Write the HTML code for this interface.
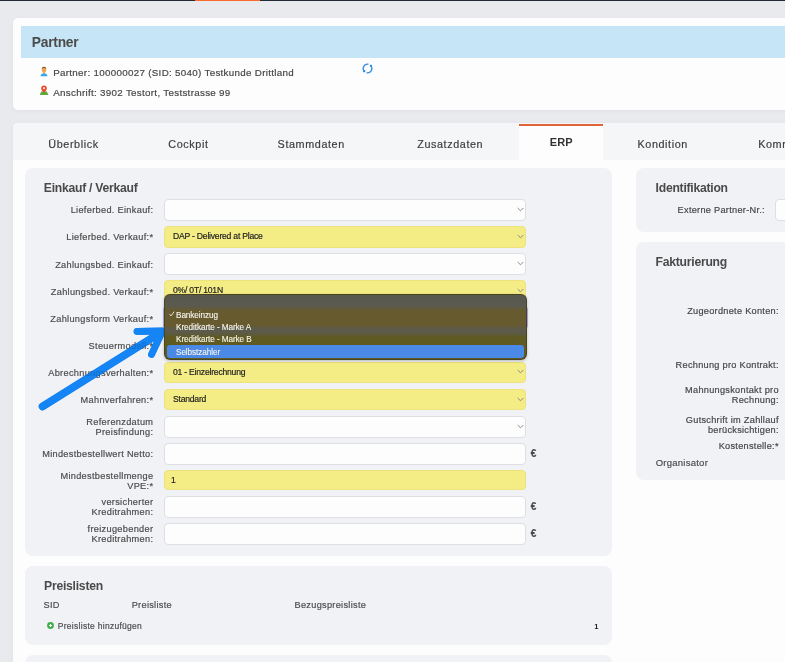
<!DOCTYPE html>
<html><head><meta charset="utf-8">
<style>
*{box-sizing:border-box;margin:0;padding:0}
html,body{width:785px;height:662px;overflow:hidden}
body{background:#e9eaee;font-family:"Liberation Sans",sans-serif;color:#4a4a4a;position:relative}
.abs{position:absolute}
.t{position:absolute;white-space:nowrap;line-height:12px;-webkit-text-stroke:0.18px currentColor}
.topbar{left:0;top:0;width:785px;height:1px;background:#232a35}
.topbar .or{position:absolute;left:195px;width:65px;top:0;height:1px;background:#fa6a2a}
.card1{left:13px;top:18px;width:800px;height:92px;background:#fdfdfd;border-radius:5px;box-shadow:0 1px 5px rgba(0,0,0,.04)}
.card1 .hdr{position:absolute;left:8px;top:8px;right:0;height:31.5px;background:#c6e5f6}
.pline{position:absolute;font-size:10.5px;color:#484848;white-space:nowrap;line-height:12px}
.card2{left:13px;top:123px;width:800px;height:600px;background:#fdfdfd;border-radius:5px;box-shadow:0 1px 5px rgba(0,0,0,.04)}
.tabbar{position:absolute;left:0;top:0;right:0;height:37px;background:#f5f6f8;border-radius:5px 5px 0 0}
.tab{position:absolute;font-size:12px;color:#444;white-space:nowrap;line-height:14px}
.erp{position:absolute;left:506.3px;top:1px;width:83.7px;height:36px;background:#fdfdfd;border-top:2px solid #e0643a}
.panel{position:absolute;background:#f1f2f6;border-radius:8px}
.ph{position:absolute;font-size:11.7px;font-weight:700;color:#454545;white-space:nowrap;line-height:14px}
.lbl{position:absolute;right:632px;font-size:9.7px;color:#505050;text-align:right;white-space:nowrap;line-height:10.5px}
.rl{position:absolute;right:6.5px;font-size:9.7px;color:#505050;text-align:right;white-space:nowrap;line-height:10.5px}
.inp{position:absolute;left:164px;width:362px;height:21px;background:#fdfdfd;border:1px solid #dedfe3;border-radius:4px}
.inp.y{background:#f4ec84;border-color:#eee27c}
.inp .v{position:absolute;left:7px;top:5px;font-size:8.5px;letter-spacing:-0.15px;color:#333;white-space:nowrap;line-height:10px}
.chev{position:absolute;right:3px;top:50%;margin-top:-2px;width:7px;height:4.5px}
.eur{position:absolute;left:531px;font-size:9.5px;color:#555;line-height:12px}
.dd{position:absolute;left:164px;top:293.5px;width:362.5px;height:66px;border-radius:6px;border:1px solid rgba(70,66,30,.9);
 background:linear-gradient(to bottom,#58584f 0px,#5a5a50 11px,#665a31 15px,#675a2e 30px,#5d5a4c 34px,#5c5a48 38px,#5f5a22 42px,#5f5a20 66px);
 box-shadow:0 1px 3px rgba(0,0,0,.25)}
.dd .it{position:absolute;left:11px;font-size:8.2px;color:#f6f4ec;white-space:nowrap;line-height:10px;-webkit-text-stroke:0.12px currentColor;letter-spacing:-0.08px}
.dd .hl{position:absolute;left:2px;top:50.5px;width:357px;height:12.5px;background:#4a89e6;border-radius:3px}
</style></head><body>
<div class="abs topbar"><div class="or"></div></div>
<div class="abs card1"><div class="hdr"></div></div>
<div class="t" style="left:31.8px;top:35px;font-size:13.8px;line-height:16px;color:#4b4b4b;letter-spacing:-0.25px;font-weight:700;-webkit-text-stroke:0">Partner</div>
<svg class="abs" style="left:39px;top:65.5px" width="10" height="11" viewBox="0 0 10 11">
<path d="M1.5 10.2 C1.7 8.2 3 7.2 5 7.2 C7 7.2 8.3 8.2 8.5 10.2z" fill="#3aa6ea"/>
<path d="M4.2 6.2 H5.8 V7.8 H4.2z" fill="#e89040"/>
<ellipse cx="5" cy="3.8" rx="2.2" ry="2.8" fill="#f0a550"/>
<path d="M2.8 3.4 C2.7 1.6 3.6 0.8 5 0.8 C6.4 0.8 7.3 1.6 7.2 3.4 C6.8 2.4 6 2.1 5 2.1 C4 2.1 3.2 2.4 2.8 3.4z" fill="#7a4a20"/>
</svg>
<div class="t" style="left:53.2px;top:67px;font-size:9.8px;line-height:12px;color:#464646;letter-spacing:0.3px">Partner: 100000027 (SID: 5040) Testkunde Drittland</div>
<svg class="abs" style="left:39px;top:85px" width="10" height="10" viewBox="0 0 10 10">
<path d="M0.8 9.9 L2.2 6.5 H7.8 L9.5 9.9z" fill="#5eaa3c"/>
<path d="M5 0.4 C6.6 0.4 7.9 1.6 7.9 3.2 C7.9 5 5.8 6.6 5 8 C4.2 6.6 2.1 5 2.1 3.2 C2.1 1.6 3.4 0.4 5 0.4z" fill="#f04426"/>
<circle cx="5" cy="3.2" r="1.1" fill="#fbe9e0"/>
</svg>
<div class="t" style="left:53.2px;top:87px;font-size:9.8px;line-height:12px;color:#464646;letter-spacing:0.3px">Anschrift: 3902 Testort, Teststrasse 99</div>
<svg class="abs" style="left:361.6px;top:63.2px" width="11" height="11" viewBox="0 0 11 11">
<path d="M6.39 1.29 A4.3 4.3 0 0 0 2.21 8.26" stroke="#3a8fe2" stroke-width="1.4" fill="none"/>
<path d="M4.61 9.71 A4.3 4.3 0 0 0 8.89 2.85" stroke="#3a8fe2" stroke-width="1.4" fill="none"/>
<circle cx="2.21" cy="8.26" r="1.15" fill="#2a86e0"/>
<circle cx="8.89" cy="2.85" r="1.15" fill="#2a86e0"/>
</svg>
<div class="abs card2"><div class="tabbar"></div><div class="erp"></div></div>
<div class="t" style="left:48.3px;top:137px;font-size:10.8px;line-height:14px;color:#3c3c3c;letter-spacing:0.6px">Überblick</div>
<div class="t" style="left:168.3px;top:137px;font-size:10.8px;line-height:14px;color:#3c3c3c;letter-spacing:0.6px">Cockpit</div>
<div class="t" style="left:277.6px;top:137px;font-size:10.8px;line-height:14px;color:#3c3c3c;letter-spacing:0.6px">Stammdaten</div>
<div class="t" style="left:417.2px;top:137px;font-size:10.8px;line-height:14px;color:#3c3c3c;letter-spacing:0.6px">Zusatzdaten</div>
<div class="t" style="left:637.5px;top:137px;font-size:10.8px;line-height:14px;color:#3c3c3c;letter-spacing:0.6px">Kondition</div>
<div class="t" style="left:758.2px;top:137px;font-size:10.8px;line-height:14px;color:#3c3c3c;letter-spacing:0.6px">Kommunikation</div>
<div class="t" style="left:549.8px;top:135px;font-size:11px;line-height:14px;color:#333;letter-spacing:0.05px;font-weight:700;-webkit-text-stroke:0">ERP</div>
<div class="panel" style="left:24.6px;top:167.5px;width:587.4px;height:388px"></div>
<div class="t" style="left:43.8px;top:181px;font-size:12.2px;line-height:14px;color:#4a4a4a;letter-spacing:-0.26px;font-weight:700;-webkit-text-stroke:0">Einkauf / Verkauf</div>
<div class="t" style="right:631.68px;text-align:right;top:204px;font-size:9.2px;line-height:12px;color:#4c4c4c;letter-spacing:0.32px">Lieferbed. Einkauf:</div>
<div class="inp" style="top:199px;height:22px"></div>
<svg class="abs" style="left:516.5px;top:207.1px" width="7" height="5" viewBox="0 0 7 5"><path d="M0.7 1 L3.5 3.8 L6.3 1" stroke="#8a8a8a" stroke-width="1" fill="none"/></svg>
<div class="t" style="right:631.68px;text-align:right;top:231px;font-size:9.2px;line-height:12px;color:#4c4c4c;letter-spacing:0.32px">Lieferbed. Verkauf:*</div>
<div class="inp y" style="top:226px;height:21.5px"></div>
<div class="t" style="left:173px;top:230px;font-size:8.6px;line-height:12px;color:#222;letter-spacing:-0.22px">DAP - Delivered at Place</div>
<svg class="abs" style="left:516.5px;top:233.8px" width="7" height="5" viewBox="0 0 7 5"><path d="M0.7 1 L3.5 3.8 L6.3 1" stroke="#8a8a8a" stroke-width="1" fill="none"/></svg>
<div class="t" style="right:631.68px;text-align:right;top:259px;font-size:9.2px;line-height:12px;color:#4c4c4c;letter-spacing:0.32px">Zahlungsbed. Einkauf:</div>
<div class="inp" style="top:253px;height:21.5px"></div>
<svg class="abs" style="left:516.5px;top:260.9px" width="7" height="5" viewBox="0 0 7 5"><path d="M0.7 1 L3.5 3.8 L6.3 1" stroke="#8a8a8a" stroke-width="1" fill="none"/></svg>
<div class="t" style="right:631.68px;text-align:right;top:286px;font-size:9.2px;line-height:12px;color:#4c4c4c;letter-spacing:0.32px">Zahlungsbed. Verkauf:*</div>
<div class="inp y" style="top:280px;height:21.5px"></div>
<div class="t" style="left:173px;top:284px;font-size:8.6px;line-height:12px;color:#222;letter-spacing:-0.22px">0%/ 0T/ 101N</div>
<svg class="abs" style="left:516.5px;top:287.9px" width="7" height="5" viewBox="0 0 7 5"><path d="M0.7 1 L3.5 3.8 L6.3 1" stroke="#8a8a8a" stroke-width="1" fill="none"/></svg>
<div class="t" style="right:631.68px;text-align:right;top:313px;font-size:9.2px;line-height:12px;color:#4c4c4c;letter-spacing:0.32px">Zahlungsform Verkauf:*</div>
<div class="inp y" style="top:307px;height:21.5px"></div>
<svg class="abs" style="left:516.5px;top:314.9px" width="7" height="5" viewBox="0 0 7 5"><path d="M0.7 1 L3.5 3.8 L6.3 1" stroke="#8a8a8a" stroke-width="1" fill="none"/></svg>
<div class="t" style="right:631.68px;text-align:right;top:340px;font-size:9.2px;line-height:12px;color:#4c4c4c;letter-spacing:0.32px">Steuermodell:*</div>
<div class="inp y" style="top:334px;height:21.5px"></div>
<svg class="abs" style="left:516.5px;top:341.9px" width="7" height="5" viewBox="0 0 7 5"><path d="M0.7 1 L3.5 3.8 L6.3 1" stroke="#8a8a8a" stroke-width="1" fill="none"/></svg>
<div class="t" style="right:631.68px;text-align:right;top:367px;font-size:9.2px;line-height:12px;color:#4c4c4c;letter-spacing:0.32px">Abrechnungsverhalten:*</div>
<div class="inp y" style="top:361.5px;height:21.5px"></div>
<div class="t" style="left:173px;top:366px;font-size:8.6px;line-height:12px;color:#222;letter-spacing:-0.22px">01 - Einzelrechnung</div>
<svg class="abs" style="left:516.5px;top:369.4px" width="7" height="5" viewBox="0 0 7 5"><path d="M0.7 1 L3.5 3.8 L6.3 1" stroke="#8a8a8a" stroke-width="1" fill="none"/></svg>
<div class="t" style="right:631.68px;text-align:right;top:394px;font-size:9.2px;line-height:12px;color:#4c4c4c;letter-spacing:0.32px">Mahnverfahren:*</div>
<div class="inp y" style="top:389px;height:21px"></div>
<div class="t" style="left:173px;top:393px;font-size:8.6px;line-height:12px;color:#222;letter-spacing:-0.22px">Standard</div>
<svg class="abs" style="left:516.5px;top:396.6px" width="7" height="5" viewBox="0 0 7 5"><path d="M0.7 1 L3.5 3.8 L6.3 1" stroke="#8a8a8a" stroke-width="1" fill="none"/></svg>
<div class="t" style="right:631.68px;text-align:right;top:416px;font-size:9.2px;line-height:12px;color:#4c4c4c;letter-spacing:0.32px">Referenzdatum</div>
<div class="t" style="right:631.68px;text-align:right;top:426px;font-size:9.2px;line-height:12px;color:#4c4c4c;letter-spacing:0.32px">Preisfindung:</div>
<div class="inp" style="top:416px;height:21.5px"></div>
<svg class="abs" style="left:516.5px;top:423.9px" width="7" height="5" viewBox="0 0 7 5"><path d="M0.7 1 L3.5 3.8 L6.3 1" stroke="#8a8a8a" stroke-width="1" fill="none"/></svg>
<div class="t" style="right:631.68px;text-align:right;top:448px;font-size:9.2px;line-height:12px;color:#4c4c4c;letter-spacing:0.32px">Mindestbestellwert Netto:</div>
<div class="inp" style="top:443px;height:21.5px"></div>
<div class="t" style="left:530.8px;top:448px;font-size:10px;line-height:12px;color:#4a4a4a;font-weight:600">€</div>
<div class="t" style="right:631.68px;text-align:right;top:470px;font-size:9.2px;line-height:12px;color:#4c4c4c;letter-spacing:0.32px">Mindestbestellmenge</div>
<div class="t" style="right:631.68px;text-align:right;top:480px;font-size:9.2px;line-height:12px;color:#4c4c4c;letter-spacing:0.32px">VPE:*</div>
<div class="inp y" style="top:470px;height:20px"></div>
<div class="t" style="left:171px;top:474px;font-size:8.6px;line-height:12px;color:#222;letter-spacing:-0.22px">1</div>
<div class="t" style="right:631.68px;text-align:right;top:496px;font-size:9.2px;line-height:12px;color:#4c4c4c;letter-spacing:0.32px">versicherter</div>
<div class="t" style="right:631.68px;text-align:right;top:506px;font-size:9.2px;line-height:12px;color:#4c4c4c;letter-spacing:0.32px">Kreditrahmen:</div>
<div class="inp" style="top:495.5px;height:22px"></div>
<div class="t" style="left:530.8px;top:501px;font-size:10px;line-height:12px;color:#4a4a4a;font-weight:600">€</div>
<div class="t" style="right:631.68px;text-align:right;top:523px;font-size:9.2px;line-height:12px;color:#4c4c4c;letter-spacing:0.32px">freizugebender</div>
<div class="t" style="right:631.68px;text-align:right;top:533px;font-size:9.2px;line-height:12px;color:#4c4c4c;letter-spacing:0.32px">Kreditrahmen:</div>
<div class="inp" style="top:523px;height:21.5px"></div>
<div class="t" style="left:530.8px;top:528px;font-size:10px;line-height:12px;color:#4a4a4a;font-weight:600">€</div>
<svg class="abs" style="left:0;top:0;mix-blend-mode:multiply" width="785" height="662" viewBox="0 0 785 662">
<g stroke="#1689fd" stroke-linecap="round" stroke-linejoin="round" fill="none">
<path d="M42.5 406.5 L160 333" stroke-width="7.5"/>
<path d="M137 331.5 L162.5 331 L151.5 354.5" stroke-width="6.8"/>
</g></svg>
<svg class="abs" style="left:0;top:0;opacity:0.75" width="785" height="662" viewBox="0 0 785 662">
<g stroke="#1585f4" stroke-linecap="round" stroke-linejoin="round" fill="none">
<path d="M42.5 406.5 L160 333" stroke-width="7.5"/>
<path d="M137 331.5 L162.5 331 L151.5 354.5" stroke-width="6.8"/>
</g></svg>
<div class="abs" style="left:162.5px;top:307px;width:2.5px;height:21px;background:#b3acf2;border-radius:2px 0 0 2px"></div>
<div class="abs" style="left:526px;top:307px;width:2px;height:21px;background:#b3acf2;border-radius:0 2px 2px 0"></div>
<div class="dd"><div class="hl"></div><div class="it" style="top:16.1px">Bankeinzug</div><div class="it" style="top:28.1px">Kreditkarte - Marke A</div><div class="it" style="top:40.1px">Kreditkarte - Marke B</div><div class="it" style="top:53.1px">Selbstzahler</div><svg class="abs" style="left:4.3px;top:16.8px" width="6" height="6" viewBox="0 0 6 6"><path d="M0.6 3.2 L2 4.9 L5.2 0.6" stroke="#f2f0e6" stroke-width="0.9" fill="none"/></svg></div>
<div class="panel" style="left:24.6px;top:565.7px;width:587.4px;height:79.8px"></div>
<div class="t" style="left:44.1px;top:579px;font-size:12.2px;line-height:14px;color:#4a4a4a;letter-spacing:-0.26px;font-weight:700;-webkit-text-stroke:0">Preislisten</div>
<div class="t" style="left:43.6px;top:599px;font-size:9.2px;line-height:12px;color:#4d4d4d;letter-spacing:0.3px">SID</div>
<div class="t" style="left:131.7px;top:599px;font-size:9.2px;line-height:12px;color:#4d4d4d;letter-spacing:0.3px">Preisliste</div>
<div class="t" style="left:294.5px;top:599px;font-size:9.2px;line-height:12px;color:#4d4d4d;letter-spacing:0.3px">Bezugspreisliste</div>
<svg class="abs" style="left:46.6px;top:622px" width="7" height="7" viewBox="0 0 7 7"><circle cx="3.5" cy="3.5" r="3.4" fill="#3fae49"/><path d="M3.5 1.9V5.1M1.9 3.5H5.1" stroke="#fff" stroke-width="1.1"/></svg>
<div class="t" style="left:57.8px;top:620px;font-size:8.5px;line-height:12px;color:#4d4d4d;letter-spacing:0.28px">Preisliste hinzufügen</div>
<div class="t" style="left:594.2px;top:622px;font-size:7.5px;line-height:10px;color:#222;font-weight:700;-webkit-text-stroke:0">1</div>
<div class="panel" style="left:24.6px;top:655.2px;width:587.4px;height:40px"></div>
<div class="panel" style="left:636.2px;top:167.5px;width:200px;height:64.2px"></div>
<div class="t" style="left:655.6px;top:181px;font-size:12.2px;line-height:14px;color:#4a4a4a;letter-spacing:-0.26px;font-weight:700;-webkit-text-stroke:0">Identifikation</div>
<div class="t" style="right:20.12px;text-align:right;top:204px;font-size:9.2px;line-height:12px;color:#464646;letter-spacing:0.28px">Externe Partner-Nr.:</div>
<div class="inp" style="left:775.4px;top:199.3px;height:21.5px;width:100px"></div>
<div class="panel" style="left:636.2px;top:241.5px;width:200px;height:238.8px"></div>
<div class="t" style="left:655.6px;top:255px;font-size:12.2px;line-height:14px;color:#4a4a4a;letter-spacing:-0.26px;font-weight:700;-webkit-text-stroke:0">Fakturierung</div>
<div class="t" style="right:6.22px;text-align:right;top:305px;font-size:9.2px;line-height:12px;color:#464646;letter-spacing:0.28px">Zugeordnete Konten:</div>
<div class="t" style="right:6.22px;text-align:right;top:359px;font-size:9.2px;line-height:12px;color:#464646;letter-spacing:0.28px">Rechnung pro Kontrakt:</div>
<div class="t" style="right:6.22px;text-align:right;top:384px;font-size:9.2px;line-height:12px;color:#464646;letter-spacing:0.28px">Mahnungskontakt pro</div>
<div class="t" style="right:6.22px;text-align:right;top:394px;font-size:9.2px;line-height:12px;color:#464646;letter-spacing:0.28px">Rechnung:</div>
<div class="t" style="right:6.22px;text-align:right;top:414px;font-size:9.2px;line-height:12px;color:#464646;letter-spacing:0.28px">Gutschrift im Zahllauf</div>
<div class="t" style="right:6.22px;text-align:right;top:424px;font-size:9.2px;line-height:12px;color:#464646;letter-spacing:0.28px">berücksichtigen:</div>
<div class="t" style="right:6.22px;text-align:right;top:440px;font-size:9.2px;line-height:12px;color:#464646;letter-spacing:0.28px">Kostenstelle:*</div>
<div class="t" style="left:655.7px;top:457px;font-size:9.5px;line-height:12px;color:#4d4d4d;letter-spacing:0.25px">Organisator</div>
</body></html>
